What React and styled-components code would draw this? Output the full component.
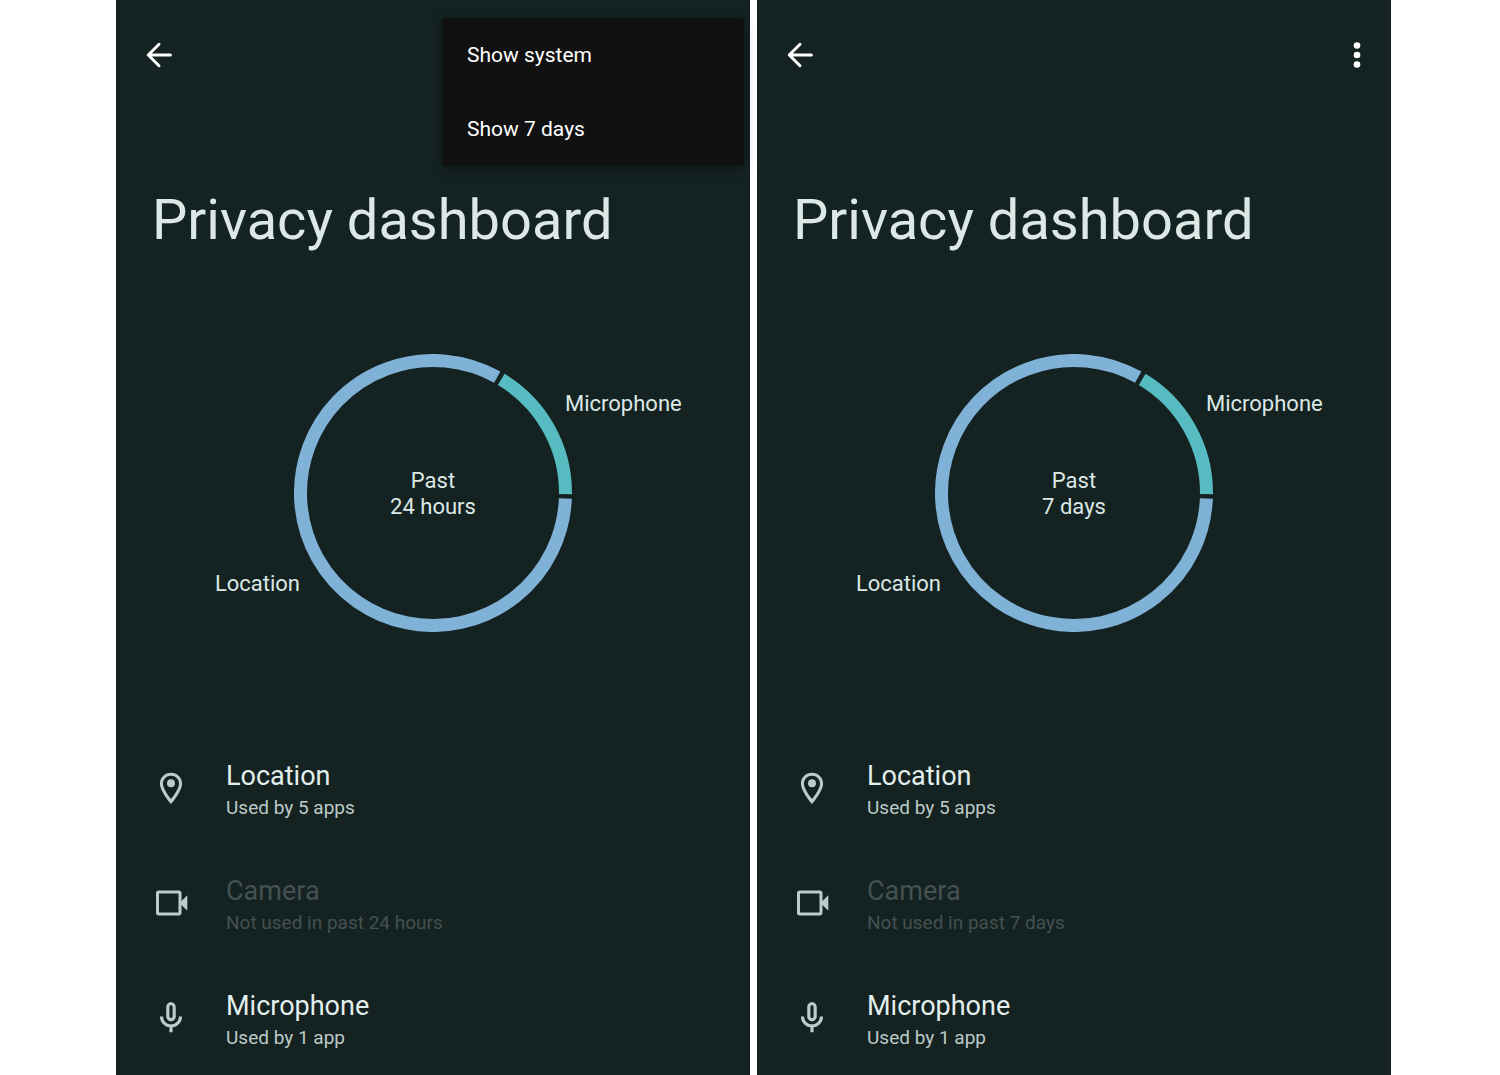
import styled, { createGlobalStyle } from "styled-components";

const GlobalStyle = createGlobalStyle`
  * {
    box-sizing: border-box;
  }
  body {
    margin: 0;
    background: #fff;
  }
  button {
    font: inherit;
    color: inherit;
    border: 0;
    padding: 0;
    background: none;
    cursor: pointer;
  }
`;

const Page = styled.div`
  display: flex;
  gap: 7px;
  min-height: 100vh;
  padding: 0 109px 0 116px;
`;

// one phone screen
const Screen = styled.main`
  flex: 1;
  min-width: 0;
  position: relative;
  background: #142221;
  color: #dbe8e6;
  font-family: Roboto, "Noto Sans", sans-serif;
`;

const TopBar = styled.header`
  display: flex;
  align-items: center;
  justify-content: space-between;
  height: 110px;
  padding: 0 15px 0 24px;
  color: #fff;
`;

const IconButton = styled.button`
  display: flex;
`;

const Icon = styled.svg`
  display: block;
  flex: none;
  width: 38px;
  height: 38px;
  fill: currentColor;
`;

const Title = styled.h1`
  margin: 0;
  padding: 74px 36px 0;
  font-size: 56px;
  line-height: 72px;
  font-weight: 400;
`;

// popup opened over the top bar
const Menu = styled.div`
  position: absolute;
  top: 18px;
  right: 6px;
  width: 302px;
  display: flex;
  flex-direction: column;
  border-radius: 3px;
  background: #111;
  box-shadow: 0 2px 12px rgba(0, 0, 0, 0.3);
`;

const MenuItem = styled.button`
  height: 74px;
  padding: 0 25px;
  text-align: left;
  color: #fff;
  font-size: 21px;
`;

const Chart = styled.section`
  position: relative;
  display: grid;
  place-items: center;
  width: 278px;
  height: 278px;
  margin: 98px auto;
  font-size: 22px;
  line-height: 26px;
`;

const Ring = styled.svg`
  grid-area: 1 / 1;
  width: 278px;
  height: 278px;
  fill: none;
  stroke-width: 13px;
`;

const Period = styled.p`
  grid-area: 1 / 1;
  margin: 0;
  padding-top: 2px;
  text-align: center;
`;

// slice names hang outside the ring
const MicLabel = styled.span`
  position: absolute;
  left: 271px;
  top: 37px;
`;

const LocationLabel = styled.span`
  position: absolute;
  right: 272px;
  top: 217px;
`;

const List = styled.ul`
  margin: 0;
  padding: 0;
  list-style: none;
`;

const Row = styled.button`
  display: flex;
  align-items: center;
  gap: 36px;
  width: 100%;
  height: 115px;
  padding: 0 36px;
  text-align: left;
  color: #bdcbc9;
`;

const RowText = styled.span`
  display: flex;
  flex-direction: column;
  padding-top: 4px;
  color: ${(props) => (props.$off ? "#445150" : "inherit")};
`;

const RowName = styled.span`
  font-size: 27px;
  line-height: 36px;
  color: ${(props) => (props.$off ? "inherit" : "#e3efed")};
`;

const RowInfo = styled.span`
  font-size: 19px;
  line-height: 28px;
`;

function BackIcon() {
  return (
    <Icon viewBox="0 0 24 24" aria-hidden="true">
      <path
        d="M19.200 12H5.300M12 5.200 5.200 12l6.800 6.800"
        fill="none"
        stroke="currentColor"
        strokeWidth="1.9"
        strokeLinecap="round"
        strokeLinejoin="round"
      />
    </Icon>
  );
}

function MoreIcon() {
  return (
    <Icon viewBox="0 0 24 24" aria-hidden="true">
      <circle cx="12" cy="6" r="2.1" />
      <circle cx="12" cy="12" r="2.1" />
      <circle cx="12" cy="18" r="2.1" />
    </Icon>
  );
}

function LocationIcon() {
  return (
    <Icon viewBox="0 0 24 24" aria-hidden="true">
      <path d="M12 2.300C8.130 2.300 5 5.300 5 9.200c0 5.100 7 13 7 13s7-7.900 7-13c0-3.900-3.130-6.900-7-6.900zM6.900 9.200c0-2.800 2.300-5 5.100-5s5.100 2.200 5.100 5c0 2.800-2.900 7.100-5.100 9.800-2.200-2.700-5.100-7-5.100-9.800z" />
      <circle cx="12" cy="9" r="2.500" />
    </Icon>
  );
}

function CameraIcon() {
  return (
    <Icon viewBox="0 0 38 38" aria-hidden="true">
      <rect x="5.500" y="8" width="22.500" height="22" rx="1.200" fill="none" stroke="currentColor" strokeWidth="3" />
      <path d="M28.500 18 35.300 11.200v15.600L28.500 20z" />
    </Icon>
  );
}

function MicIcon() {
  return (
    <Icon viewBox="0 0 24 24" aria-hidden="true">
      <path d="M12 14c1.66 0 3-1.34 3-3V5c0-1.66-1.34-3-3-3S9 3.34 9 5v6c0 1.66 1.34 3 3 3zm-1-9c0-.55.45-1 1-1s1 .45 1 1v6c0 .55-.45 1-1 1s-1-.45-1-1V5zm6 6c0 2.76-2.24 5-5 5s-5-2.24-5-5H5c0 3.53 2.61 6.43 6 6.92V21h2v-3.08c3.39-.49 6-3.39 6-6.92h-2z" />
    </Icon>
  );
}

// angles in degrees, clockwise from 3 o'clock
function arc(from, to) {
  const point = (deg) => {
    const rad = (deg * Math.PI) / 180;
    return `${139 + 132.5 * Math.cos(rad)} ${139 + 132.5 * Math.sin(rad)}`;
  };
  const large = to - from > 180 ? 1 : 0;
  return `M${point(from)} A132.5 132.5 0 ${large} 1 ${point(to)}`;
}

function UsageChart({ period }) {
  return (
    <Chart>
      <Ring viewBox="0 0 278 278" aria-hidden="true">
        <path d={arc(2.4, 299)} stroke="#7fb2d6" />
        <path d={arc(301, 360.5)} stroke="#57bcc1" />
      </Ring>
      <Period>
        Past
        <br />
        {period}
      </Period>
      <MicLabel>Microphone</MicLabel>
      <LocationLabel>Location</LocationLabel>
    </Chart>
  );
}

function PermissionRow({ icon, name, info, off }) {
  return (
    <li>
      <Row disabled={off}>
        {icon}
        <RowText $off={off}>
          <RowName $off={off}>{name}</RowName>
          <RowInfo>{info}</RowInfo>
        </RowText>
      </Row>
    </li>
  );
}

function PrivacyDashboard({ period, menuOpen }) {
  return (
    <Screen>
      <TopBar>
        <IconButton aria-label="Back">
          <BackIcon />
        </IconButton>
        {!menuOpen && (
          <IconButton aria-label="More options">
            <MoreIcon />
          </IconButton>
        )}
      </TopBar>
      {menuOpen && (
        <Menu>
          <MenuItem>Show system</MenuItem>
          <MenuItem>Show 7 days</MenuItem>
        </Menu>
      )}
      <Title>Privacy dashboard</Title>
      <UsageChart period={period} />
      <List>
        <PermissionRow icon={<LocationIcon />} name="Location" info="Used by 5 apps" />
        <PermissionRow icon={<CameraIcon />} name="Camera" info={`Not used in past ${period}`} off />
        <PermissionRow icon={<MicIcon />} name="Microphone" info="Used by 1 app" />
      </List>
    </Screen>
  );
}

function App() {
  return (
    <>
      <GlobalStyle />
      <Page>
        <PrivacyDashboard period="24 hours" menuOpen />
        <PrivacyDashboard period="7 days" />
      </Page>
    </>
  );
}

export default App;
